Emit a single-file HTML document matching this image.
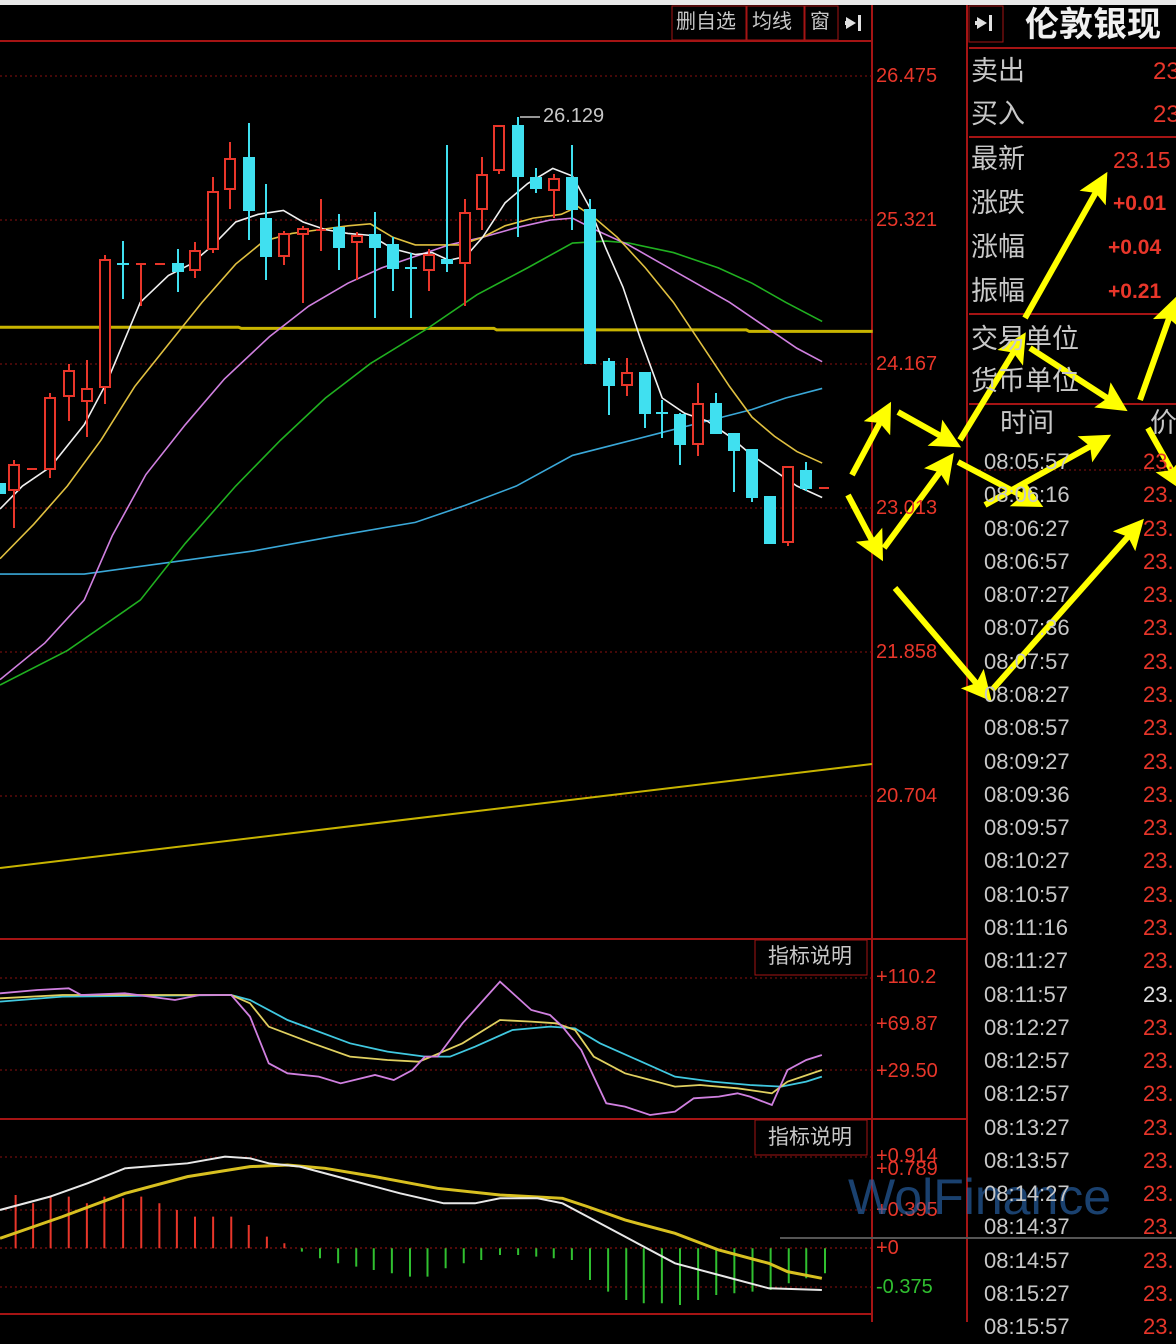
<!DOCTYPE html>
<html><head><meta charset="utf-8"><style>
html,body{margin:0;padding:0;background:#000;}
body{width:1176px;height:1322px;position:relative;overflow:hidden;font-family:"Liberation Sans","Noto Sans CJK SC",sans-serif;}
.t{position:absolute;white-space:nowrap;line-height:1;}
.g{color:#c8c8c8;}
.r{color:#e8362a;}
</style></head><body>
<div style="position:absolute;left:0;top:0;width:1176px;height:5px;background:#e8e8e8"></div>
<svg width="1176" height="1322" style="position:absolute;left:0;top:0">
<defs>
<marker id="ah" viewBox="0 0 10 10" refX="5" refY="5" markerWidth="5" markerHeight="5" orient="auto" markerUnits="strokeWidth"><path d="M0,0 L10,5 L0,10 L2,5 Z" fill="#ffff00"/></marker>
</defs>
<g stroke="#a51414" stroke-width="2" fill="none">
<line x1="0" y1="41" x2="872" y2="41"/>
<line x1="872" y1="5" x2="872" y2="1322"/>
<line x1="967" y1="5" x2="967" y2="1322"/>
<line x1="0" y1="939" x2="967" y2="939"/>
<line x1="0" y1="1119" x2="967" y2="1119"/>
<line x1="0" y1="1314" x2="872" y2="1314"/>
<line x1="969" y1="48" x2="1176" y2="48"/>
<line x1="969" y1="137" x2="1176" y2="137"/>
<line x1="969" y1="314" x2="1176" y2="314"/>
<line x1="969" y1="404" x2="1176" y2="404"/>
<rect x="672" y="6" width="74" height="34" stroke-width="1"/>
<rect x="747" y="6" width="57" height="34" stroke-width="1"/>
<rect x="805" y="6" width="33" height="34" stroke-width="1"/>
<rect x="969" y="6" width="34" height="36" stroke-width="1"/>
<rect x="755" y="940" width="112" height="35" stroke-width="1"/>
<rect x="755" y="1120" width="112" height="35" stroke-width="1"/>
</g>
<g stroke="#8a1010" stroke-width="1" stroke-dasharray="2,3">
<line x1="0" y1="76" x2="872" y2="76"/>
<line x1="0" y1="220" x2="872" y2="220"/>
<line x1="0" y1="364" x2="872" y2="364"/>
<line x1="0" y1="508" x2="872" y2="508"/>
<line x1="0" y1="652" x2="872" y2="652"/>
<line x1="0" y1="796" x2="872" y2="796"/>
<line x1="0" y1="978" x2="872" y2="978"/>
<line x1="0" y1="1025" x2="872" y2="1025"/>
<line x1="0" y1="1070" x2="872" y2="1070"/>
<line x1="0" y1="1157" x2="872" y2="1157"/>
<line x1="0" y1="1210" x2="872" y2="1210"/>
<line x1="0" y1="1287" x2="872" y2="1287"/>
<line x1="969" y1="470" x2="1176" y2="470"/>
</g>
<line x1="0" y1="1248" x2="872" y2="1248" stroke="#a51414" stroke-width="1" stroke-dasharray="2,3"/>
<line x1="0" y1="868" x2="872" y2="764" stroke="#c8b400" stroke-width="2"/>
<g transform="scale(0.5612,0.3827)" fill="none">
<polyline vector-effect="non-scaling-stroke" stroke="#c8b400" stroke-width="3" points="0,855 425,855 430,858 880,858 885,862 1330,862 1335,866 1555,866"/>
<g stroke-width="1.6">
<polyline vector-effect="non-scaling-stroke" stroke="#3aa8d8" points="0,1500 150,1500 300,1470 450,1440 600,1400 740,1365 830,1320 920,1270 1020,1190 1100,1160 1180,1130 1260,1100 1340,1070 1400,1040 1465,1015"/>
<polyline vector-effect="non-scaling-stroke" stroke="#20b020" points="0,1790 120,1700 250,1568 330,1420 420,1270 500,1150 580,1040 660,950 760,860 850,770 940,700 1020,635 1080,630 1120,635 1200,660 1280,700 1340,740 1400,790 1465,840"/>
<polyline vector-effect="non-scaling-stroke" stroke="#d080e0" points="0,1776 80,1680 150,1568 200,1400 260,1240 330,1110 400,990 480,880 550,800 620,740 680,700 740,670 800,640 860,620 920,595 980,575 1020,570 1060,600 1120,640 1180,690 1240,740 1300,790 1360,850 1420,910 1465,945"/>
<polyline vector-effect="non-scaling-stroke" stroke="#e0c040" points="0,1460 60,1370 120,1270 180,1150 240,1010 300,900 360,790 420,690 470,630 520,610 570,600 620,590 660,585 700,620 740,640 780,640 820,640 860,620 900,590 950,570 1000,560 1030,540 1060,570 1100,620 1150,700 1200,790 1250,900 1300,1010 1340,1090 1380,1140 1420,1180 1465,1210"/>
<polyline vector-effect="non-scaling-stroke" stroke="#f0f0f0" points="0,1330 40,1270 90,1220 150,1110 190,1000 250,790 300,720 340,690 380,640 420,580 460,560 505,550 540,580 580,600 620,610 660,615 700,650 740,665 770,660 800,680 830,670 860,620 900,530 940,480 985,440 1020,460 1050,540 1080,650 1110,750 1140,880 1180,1040 1220,1080 1260,1100 1300,1140 1340,1190 1380,1230 1420,1270 1465,1300"/>
</g>
</g>
<g stroke-width="2">
<g stroke="#e8362a" fill="#000">
<line x1="14" y1="460" x2="14" y2="528"/><rect x="9" y="465" width="10" height="25"/>
<line x1="27" y1="469" x2="37" y2="469"/>
<line x1="50" y1="393" x2="50" y2="478"/><rect x="45" y="398" width="10" height="71"/>
<line x1="69" y1="364" x2="69" y2="421"/><rect x="64" y="371" width="10" height="25"/>
<line x1="87" y1="360" x2="87" y2="437"/><rect x="82" y="389" width="10" height="12"/>
<line x1="105" y1="255" x2="105" y2="404"/><rect x="100" y="260" width="10" height="127"/>
<line x1="141" y1="264" x2="141" y2="306"/><line x1="136" y1="264" x2="146" y2="264"/>
<line x1="155" y1="264" x2="165" y2="264"/>
<line x1="195" y1="242" x2="195" y2="278"/><rect x="190" y="251" width="10" height="19"/>
<line x1="213" y1="177" x2="213" y2="253"/><rect x="208" y="192" width="10" height="57"/>
<line x1="230" y1="142" x2="230" y2="209"/><rect x="225" y="159" width="10" height="30"/>
<line x1="284" y1="231" x2="284" y2="265"/><rect x="279" y="234" width="10" height="22"/>
<line x1="303" y1="226" x2="303" y2="303"/><rect x="298" y="229" width="10" height="5"/>
<line x1="321" y1="199" x2="321" y2="251"/><line x1="316" y1="230" x2="326" y2="230"/>
<line x1="357" y1="232" x2="357" y2="280"/><rect x="352" y="236" width="10" height="6"/>
<line x1="429" y1="249" x2="429" y2="291"/><rect x="424" y="255" width="10" height="15"/>
<line x1="465" y1="199" x2="465" y2="306"/><rect x="460" y="213" width="10" height="50"/>
<line x1="482" y1="157" x2="482" y2="230"/><rect x="477" y="175" width="10" height="34"/>
<line x1="499" y1="126" x2="499" y2="174"/><rect x="494" y="126" width="10" height="44"/>
<line x1="554" y1="174" x2="554" y2="218"/><rect x="549" y="179" width="10" height="11"/>
<line x1="627" y1="358" x2="627" y2="396"/><rect x="622" y="373" width="10" height="12"/>
<line x1="698" y1="383" x2="698" y2="456"/><rect x="693" y="404" width="10" height="40"/>
<line x1="788" y1="467" x2="788" y2="546"/><rect x="783" y="467" width="10" height="75"/>
<line x1="819" y1="488" x2="829" y2="488"/>
</g>
<g stroke="#40e0f0" fill="#40e0f0">
<rect x="-3" y="484" width="8" height="9"/>
<line x1="123" y1="241" x2="123" y2="299"/><line x1="117" y1="264" x2="129" y2="264"/>
<line x1="178" y1="249" x2="178" y2="292"/><rect x="173" y="264" width="10" height="7"/>
<line x1="249" y1="123" x2="249" y2="240"/><rect x="244" y="158" width="10" height="52"/>
<line x1="266" y1="184" x2="266" y2="280"/><rect x="261" y="219" width="10" height="37"/>
<line x1="339" y1="214" x2="339" y2="270"/><rect x="334" y="228" width="10" height="19"/>
<line x1="375" y1="212" x2="375" y2="318"/><rect x="370" y="235" width="10" height="12"/>
<line x1="393" y1="237" x2="393" y2="291"/><rect x="388" y="245" width="10" height="23"/>
<line x1="411" y1="253" x2="411" y2="318"/><line x1="405" y1="268" x2="417" y2="268"/>
<line x1="447" y1="145" x2="447" y2="272"/><rect x="442" y="260" width="10" height="3"/>
<line x1="518" y1="117" x2="518" y2="237"/><rect x="513" y="126" width="10" height="50"/>
<line x1="536" y1="168" x2="536" y2="193"/><rect x="531" y="178" width="10" height="10"/>
<line x1="572" y1="145" x2="572" y2="230"/><rect x="567" y="178" width="10" height="31"/>
<line x1="590" y1="199" x2="590" y2="364"/><rect x="585" y="210" width="10" height="153"/>
<line x1="609" y1="358" x2="609" y2="415"/><rect x="604" y="362" width="10" height="23"/>
<line x1="645" y1="373" x2="645" y2="428"/><rect x="640" y="373" width="10" height="40"/>
<line x1="662" y1="400" x2="662" y2="438"/><line x1="656" y1="413" x2="668" y2="413"/>
<line x1="680" y1="413" x2="680" y2="465"/><rect x="675" y="415" width="10" height="29"/>
<line x1="716" y1="393" x2="716" y2="433"/><rect x="711" y="404" width="10" height="29"/>
<line x1="734" y1="434" x2="734" y2="492"/><rect x="729" y="434" width="10" height="16"/>
<line x1="752" y1="450" x2="752" y2="502"/><rect x="747" y="450" width="10" height="47"/>
<line x1="770" y1="497" x2="770" y2="544"/><rect x="765" y="497" width="10" height="46"/>
<line x1="806" y1="462" x2="806" y2="491"/><rect x="801" y="471" width="10" height="17"/>
</g>
</g>
<line x1="520" y1="117" x2="540" y2="117" stroke="#c8c8c8" stroke-width="1.5"/>
<g transform="translate(0,930) scale(0.625,0.3333)" fill="none">
<polyline vector-effect="non-scaling-stroke" stroke-width="1.8" stroke="#40c8e0" points="0,215 100,200 370,195 400,210 460,270 560,340 620,365 680,380 720,380 760,350 820,300 880,290 920,295 960,340 1020,390 1080,440 1140,455 1200,465 1250,470 1290,455 1315,440"/>
<polyline vector-effect="non-scaling-stroke" stroke-width="1.8" stroke="#e0d060" points="0,205 100,195 200,195 370,195 400,220 430,290 500,340 560,380 620,390 670,395 690,380 740,340 800,270 850,275 890,280 920,300 950,380 1000,430 1080,470 1120,465 1180,475 1235,490 1260,455 1315,420"/>
<polyline vector-effect="non-scaling-stroke" stroke-width="1.8" stroke="#d080e0" points="0,190 60,180 110,175 130,195 200,190 280,210 320,195 370,195 400,260 430,400 460,430 510,440 545,460 600,435 630,450 660,420 680,380 700,380 740,280 800,155 850,240 880,255 900,290 930,360 970,520 1000,530 1040,555 1080,545 1110,505 1150,500 1180,490 1200,500 1235,525 1260,420 1290,390 1315,375"/>
</g>
<g transform="translate(0,930) scale(0.625,0.3333)" fill="none">
<path vector-effect="non-scaling-stroke" stroke="#e8362a" stroke-width="2" d="M25,955V795M53,955V820M81,955V800M110,955V800M139,955V820M167,955V800M197,955V805M226,955V800M255,955V820M283,955V840M312,955V860M341,955V860M370,955V860M398,955V885M427,955V920M455,955V940"/>
<path vector-effect="non-scaling-stroke" stroke="#30c030" stroke-width="2" d="M483,955V965M512,955V985M541,955V1000M570,955V1010M598,955V1020M627,955V1030M656,955V1040M684,955V1040M713,955V1015M742,955V1000M770,955V990M800,955V975M829,955V975M858,955V980M886,955V985M915,955V990M944,955V1050M973,955V1085M1002,955V1110M1030,955V1120M1059,955V1120M1088,955V1125M1117,955V1110M1146,955V1095M1175,955V1090M1204,955V1085M1233,955V1080M1262,955V1060M1290,955V1045M1320,955V1030"/>
<polyline vector-effect="non-scaling-stroke" stroke-width="3" stroke="#d8c020" points="0,925 100,860 200,790 300,740 400,710 460,705 520,715 600,740 700,775 800,795 900,805 940,830 1000,870 1080,910 1150,960 1230,1000 1260,1025 1315,1045"/>
<polyline vector-effect="non-scaling-stroke" stroke-width="2" stroke="#e8e8e8" points="0,840 80,800 140,760 200,715 300,700 360,680 400,685 430,700 480,710 560,750 640,790 710,820 760,820 800,805 860,805 900,820 940,860 1000,920 1080,1000 1160,1040 1230,1075 1315,1080"/>
</g>
<line x1="780" y1="1238" x2="1176" y2="1238" stroke="#555" stroke-width="2"/>
<g stroke="#ffff00" stroke-width="6" fill="none" marker-end="url(#ah)">
<line x1="1025" y1="318" x2="1100" y2="185"/>
<line x1="1140" y1="400" x2="1172" y2="310"/>
<line x1="852" y1="475" x2="884" y2="415"/>
<line x1="898" y1="412" x2="948" y2="440"/>
<line x1="960" y1="440" x2="1018" y2="345"/>
<line x1="1030" y1="348" x2="1115" y2="403"/>
<line x1="848" y1="495" x2="876" y2="548"/>
<line x1="884" y1="548" x2="945" y2="465"/>
<line x1="958" y1="462" x2="1030" y2="500"/>
<line x1="985" y1="505" x2="1098" y2="442"/>
<line x1="895" y1="588" x2="982" y2="690"/>
<line x1="992" y1="690" x2="1134" y2="530"/>
<line x1="1148" y1="428" x2="1176" y2="478"/>
</g>
<g fill="#e0e0e0">
<path d="M846,17 L856,23 L846,29 Z M845,21 h4 v4 h-4 Z"/><rect x="858" y="15" width="3" height="16"/>
<path d="M977,17 L987,23 L977,29 Z M975,21 h4 v4 h-4 Z"/><rect x="989" y="15" width="3" height="16"/>
</g>
</svg>
<div class="t g" style="left:676px;top:12px;font-size:20px">删自选</div>
<div class="t g" style="left:752px;top:12px;font-size:20px">均线</div>
<div class="t g" style="left:810px;top:12px;font-size:20px">窗</div>
<div class="t g" style="left:543px;top:106px;font-size:20px">26.129</div>
<div class="t r" style="left:876px;top:66px;font-size:20px">26.475</div>
<div class="t r" style="left:876px;top:210px;font-size:20px">25.321</div>
<div class="t r" style="left:876px;top:354px;font-size:20px">24.167</div>
<div class="t r" style="left:876px;top:498px;font-size:20px">23.013</div>
<div class="t r" style="left:876px;top:642px;font-size:20px">21.858</div>
<div class="t r" style="left:876px;top:786px;font-size:20px">20.704</div>
<div class="t g" style="left:768px;top:946px;font-size:21px">指标说明</div>
<div class="t g" style="left:768px;top:1127px;font-size:21px">指标说明</div>
<div class="t r" style="left:876px;top:967px;font-size:20px">+110.2</div>
<div class="t r" style="left:876px;top:1014px;font-size:20px">+69.87</div>
<div class="t r" style="left:876px;top:1061px;font-size:20px">+29.50</div>
<div class="t r" style="left:876px;top:1146px;font-size:20px">+0.914</div>
<div class="t r" style="left:876px;top:1159px;font-size:20px">+0.789</div>
<div class="t r" style="left:876px;top:1200px;font-size:20px">+0.395</div>
<div class="t r" style="left:876px;top:1238px;font-size:20px">+0</div>
<div class="t" style="left:876px;top:1277px;font-size:20px;color:#30c030">-0.375</div>
<div class="t" style="left:848px;top:1172px;font-size:50px;color:rgba(40,100,170,0.65)">WolFinance</div>
<div class="t" style="left:1025px;top:8px;font-size:34px;font-weight:bold;color:#f0f0f0">伦敦银现</div>
<div class="t g" style="left:971px;top:58px;font-size:27px">卖出</div>
<div class="t g" style="left:971px;top:101px;font-size:27px">买入</div>
<div class="t r" style="left:1153px;top:60px;font-size:24px">23</div>
<div class="t r" style="left:1153px;top:103px;font-size:24px">23</div>
<div class="t g" style="left:971px;top:146px;font-size:27px">最新</div>
<div class="t g" style="left:971px;top:190px;font-size:27px">涨跌</div>
<div class="t g" style="left:971px;top:234px;font-size:27px">涨幅</div>
<div class="t g" style="left:971px;top:278px;font-size:27px">振幅</div>
<div class="t r" style="left:1113px;top:149px;font-size:23px">23.15</div>
<div class="t r" style="left:1113px;top:193px;font-size:21px;font-weight:bold">+0.01</div>
<div class="t r" style="left:1108px;top:237px;font-size:21px;font-weight:bold">+0.04</div>
<div class="t r" style="left:1108px;top:281px;font-size:21px;font-weight:bold">+0.21</div>
<div class="t g" style="left:971px;top:326px;font-size:27px">交易单位</div>
<div class="t g" style="left:971px;top:368px;font-size:27px">货币单位</div>
<div class="t g" style="left:1000px;top:410px;font-size:27px">时间</div>
<div class="t g" style="left:1150px;top:410px;font-size:27px">价</div>
<div style="position:absolute;left:984px;top:445px;font-size:22px;line-height:33.28px;color:#c8c8c8;white-space:pre">08:05:57
08:06:16
08:06:27
08:06:57
08:07:27
08:07:36
08:07:57
08:08:27
08:08:57
08:09:27
08:09:36
08:09:57
08:10:27
08:10:57
08:11:16
08:11:27
08:11:57
08:12:27
08:12:57
08:12:57
08:13:27
08:13:57
08:14:27
08:14:37
08:14:57
08:15:27
08:15:57</div>
<div style="position:absolute;left:1143px;top:445px;font-size:22px;line-height:33.28px;color:#e8362a;white-space:pre">23.
23.
23.
23.
23.
23.
23.
23.
23.
23.
23.
23.
23.
23.
23.
23.
<span style="color:#e0e0e0">23.</span>
23.
23.
23.
23.
23.
23.
23.
23.
23.
23.</div>
</body></html>
